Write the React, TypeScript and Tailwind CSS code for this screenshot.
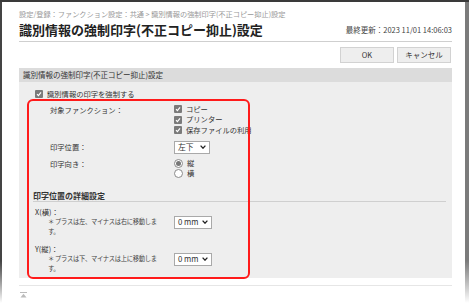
import React from "react";

function Box() {
  return (
    <span className="flex h-[8px] w-[8px] shrink-0 items-center justify-center rounded-[1px] bg-[#7a7a7a]">
      <svg width="6" height="6" viewBox="0 0 6 6">
        <path d="M1 3.2 L2.4 4.6 L5 1.4" fill="none" stroke="#fff" strokeWidth="1.2" />
      </svg>
    </span>
  );
}

function Radio({ on }: { on?: boolean }) {
  return (
    <span className="flex h-[9px] w-[9px] shrink-0 items-center justify-center rounded-full border border-[#8a8a8a] bg-white">
      {on && <span className="h-[5px] w-[5px] rounded-full bg-[#777]" />}
    </span>
  );
}

function Select({ value, w }: { value: string; w: string }) {
  return (
    <div className={`flex h-[13px] items-center justify-between border border-[#a9a9a9] bg-white pl-[3px] pr-[3px] text-[7.8px] leading-none text-[#333] ${w}`}>
      <span>{value}</span>
      <svg width="6" height="4" viewBox="0 0 6 4">
        <path d="M0.6 0.6 L3 3.2 L5.4 0.6" fill="none" stroke="#222" strokeWidth="1.3" />
      </svg>
    </div>
  );
}

function Offset({ label, note }: { label: string; note: string }) {
  return (
    <div className="flex items-center">
      <div className="w-[155px] pl-[16px]">
        <div className="leading-[10px]">{label}</div>
        <div className="pl-[13px] text-[6.3px] leading-[10.5px] tracking-[-0.3px] text-[#444]">
          <div className="whitespace-nowrap">{note}</div>
          <div>す。</div>
        </div>
      </div>
      <Select value="0 mm" w="w-[38px]" />
    </div>
  );
}

export default function App() {
  return (
    <div className="flex h-[303px] w-[469px] flex-col overflow-hidden bg-white font-['Noto_Sans_CJK_JP',sans-serif] text-[#333]">
      <div className="h-[2px] bg-[#3a3a3a]" />
      <div className="flex flex-1">
        <div className="w-[2px] bg-gradient-to-b from-[#444] via-[#444] via-[86%] to-white" />
        <div className="flex-1 pl-[17px] pr-[13px]">
          <div className="mt-[7px] text-[7.2px] leading-[11px] text-[#999]">
            設定/登録：ファンクション設定：共通 &gt; 識別情報の強制印字(不正コピー抑止)設定
          </div>
          <div className="mt-[1px] flex items-center justify-between">
            <div className="text-[13px] font-bold leading-[18px] text-[#222]">識別情報の強制印字(不正コピー抑止)設定</div>
            <div className="text-[7.5px] leading-[10px] text-[#444]">最終更新：2023 11/01 14:06:03</div>
          </div>
          <div className="mt-[2px] border-t border-[#cfcfcf]" />
          <div className="mt-[5px] flex justify-end gap-[3px] pr-[1px]">
            <div className="flex h-[16px] w-[54px] items-center justify-center border border-[#d2d2d2] bg-[#eeeeee] text-[7.5px]">OK</div>
            <div className="flex h-[16px] w-[54px] items-center justify-center border border-[#d2d2d2] bg-[#eeeeee] text-[7.5px]">キャンセル</div>
          </div>

          <div className="mt-[5px]">
            <div className="h-[14px] bg-[#dcdcdc] pl-[4px] text-[7.5px] leading-[14px]">識別情報の強制印字(不正コピー抑止)設定</div>
            <div className="relative h-[196px] bg-[#eeeeee] text-[7.3px]">
              <div className="flex h-[10px] items-center gap-[4px] pl-[16px] pt-[12px]">
                <Box />
                <span>識別情報の印字を強制する</span>
              </div>

              <div className="mt-[10px] flex pl-[31px]">
                <div className="w-[124px] pt-[1px] leading-[10.5px]">対象ファンクション：</div>
                <div className="flex flex-col">
                  {["コピー", "プリンター", "保存ファイルの利用"].map((t) => (
                    <div key={t} className="flex h-[10.5px] items-center gap-[4px]">
                      <Box />
                      <span>{t}</span>
                    </div>
                  ))}
                </div>
              </div>

              <div className="mt-[5px] flex items-center pl-[31px]">
                <div className="w-[124px]">印字位置：</div>
                <Select value="左下" w="w-[36px]" />
              </div>

              <div className="mt-[5px] flex pl-[31px]">
                <div className="w-[124px] leading-[10px]">印字向き：</div>
                <div className="flex flex-col">
                  {[
                    ["縦", true],
                    ["横", false],
                  ].map(([t, on]) => (
                    <div key={t as string} className="flex h-[10px] items-center gap-[4px]">
                      <Radio on={on as boolean} />
                      <span>{t as string}</span>
                    </div>
                  ))}
                </div>
              </div>

              <div className="ml-[14px] mr-[6px] mt-[11px] border-b border-[#cfcfcf] text-[8px] font-bold leading-[11px]">印字位置の詳細設定</div>

              <div className="mt-[5px]">
                <Offset label="X(横)：" note="＊ プラスは左、マイナスは右に移動しま" />
              </div>
              <div className="mt-[6px]">
                <Offset label="Y(縦)：" note="＊ プラスは下、マイナスは上に移動しま" />
              </div>

              <div className="pointer-events-none absolute left-[8px] top-[17px] h-[180px] w-[223px] rounded-[6px] border-2 border-[#ff1a1a]" />
            </div>
          </div>

          <div className="mt-[7px] border-t border-[#e6e6e6]" />
          <div className="ml-[1px] mt-[6px]">
            <svg width="7" height="6" viewBox="0 0 7 6">
              <rect x="0" y="0" width="7" height="1" fill="#bbb" />
              <path d="M3.5 1.8 L6.5 5.5 L0.5 5.5 Z" fill="#bbb" />
            </svg>
          </div>
        </div>
        <div className="w-[4px] bg-gradient-to-b from-[#7b7b7b] via-[#7b7b7b] via-[86%] to-white" />
      </div>
    </div>
  );
}
